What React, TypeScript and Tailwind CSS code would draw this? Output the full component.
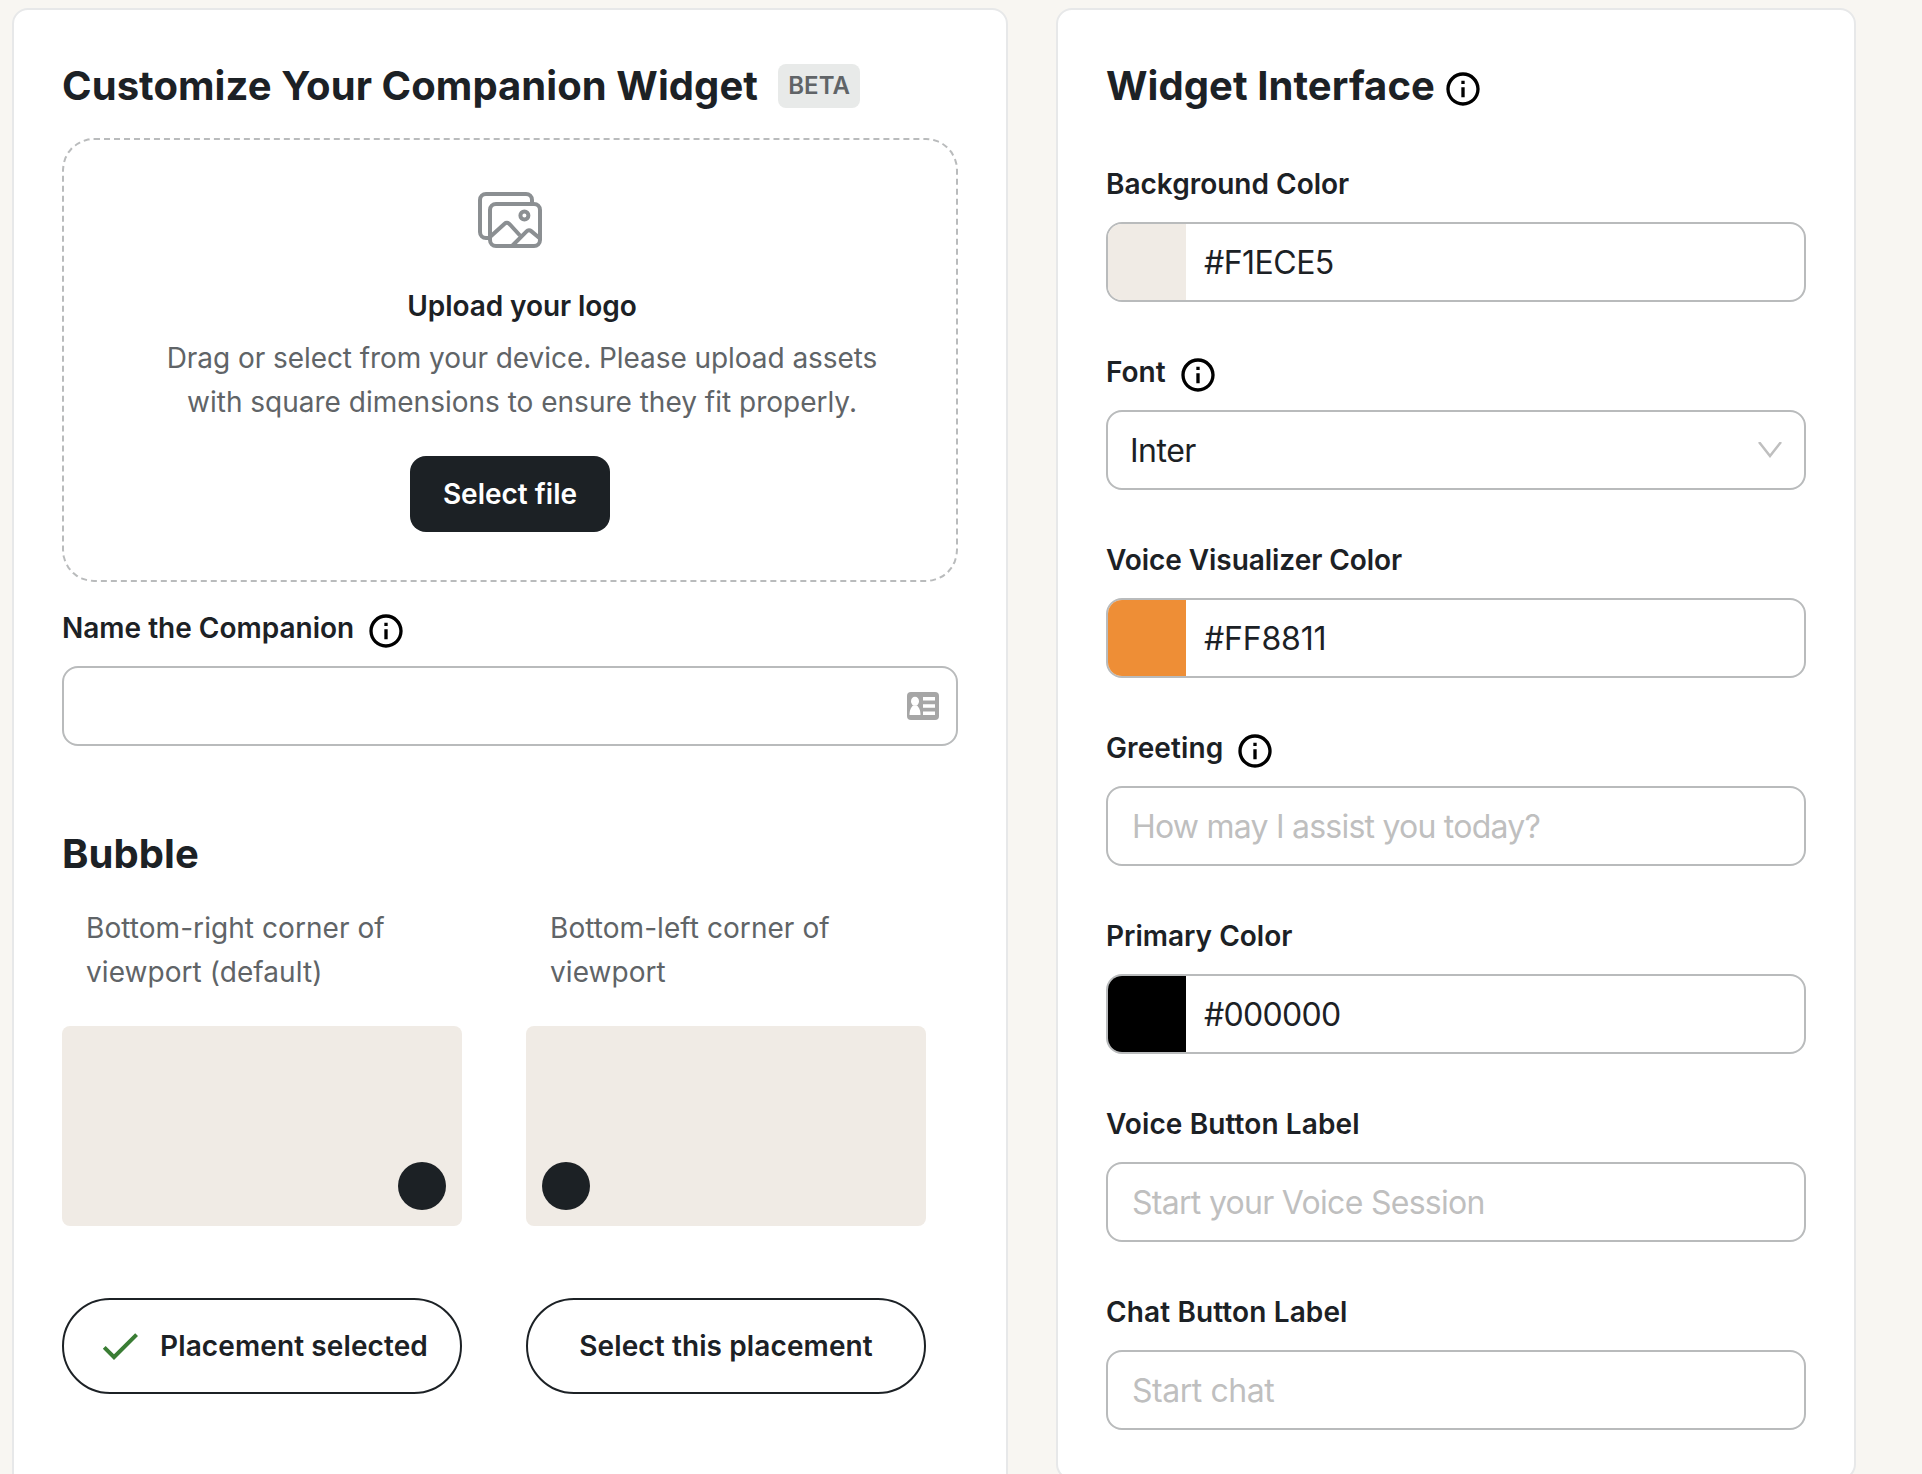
import React from "react";

function InfoIcon({ className = "" }: { className?: string }) {
  return (
    <svg viewBox="0 0 24 24" className={`h-10 w-10 shrink-0 fill-black ${className}`}>
      <path d="M11 7h2v2h-2zm0 4h2v6h-2zm1-9C6.48 2 2 6.48 2 12s4.48 10 10 10 10-4.48 10-10S17.52 2 12 2zm0 18c-4.41 0-8-3.59-8-8s3.59-8 8-8 8 3.59 8 8-3.59 8-8 8z" />
    </svg>
  );
}

function GalleryIcon() {
  return (
    <svg viewBox="0 0 64 56" className="h-14 w-16" fill="none" stroke="#8b8f92" strokeWidth="4" strokeLinejoin="round">
      <path d="M11 46H8a6 6 0 0 1-6-6V8a6 6 0 0 1 6-6h40a6 6 0 0 1 6 6v4" />
      <rect x="12" y="12" width="50" height="42" rx="6" />
      <circle cx="46.4" cy="23.4" r="4" />
      <path d="M12 45L26.6 31.700a3.400 3.400 0 0 1 4.700 0.100L42 43.500" />
      <path d="M34 54L48.600 39.300a3.400 3.400 0 0 1 4.600 -0.200L62 46.500" />
    </svg>
  );
}

function ContactCardIcon() {
  return (
    <svg viewBox="0 0 32 28" className="h-7 w-8">
      <rect width="32" height="28" rx="4" fill="#a6a6a6" />
      <ellipse cx="8" cy="9.3" rx="4" ry="4.500" fill="#fff" />
      <path d="M2.500 23c0-5 1.500-7.500 3.500-9.500h4c2 2 3.500 4.500 3.500 9.500z" fill="#fff" />
      <path d="M16 5h12v3.500H16zM16 12.300h12v3.500H16zM16 19.500h12V23H16z" fill="#fff" />
    </svg>
  );
}

function Label({ text, info, className = "" }: { text: string; info?: boolean; className?: string }) {
  return (
    <div className={`flex h-11 items-center text-[28px] font-semibold leading-[44px] ${className}`}>
      <span>{text}</span>
      {info && <InfoIcon className="ml-3 mt-1.5" />}
    </div>
  );
}

function Field({
  label,
  info,
  labelClass,
  children,
}: {
  label: string;
  info?: boolean;
  labelClass?: string;
  children: React.ReactNode;
}) {
  return (
    <div className="flex flex-col gap-4">
      <Label text={label} info={info} className={labelClass} />
      <div className="flex h-20 items-center overflow-hidden rounded-2xl border-2 border-[#b9bbbc] text-[32px] leading-[48px]">
        {children}
      </div>
    </div>
  );
}

function ColorValue({ swatch, value, className }: { swatch: string; value: string; className: string }) {
  return (
    <>
      <div className={`h-full w-[78px] shrink-0 ${swatch}`} />
      <span className={`ml-[18px] mt-0.5 ${className}`}>{value}</span>
    </>
  );
}

function Placeholder({ children, className }: { children: string; className: string }) {
  return <span className={`ml-6 mt-0.5 text-[#bfbfbf] ${className}`}>{children}</span>;
}

function Placement({ text, side, selected }: { text: React.ReactNode; side: "left" | "right"; selected?: boolean }) {
  return (
    <div className="flex w-[400px] flex-col">
      <p className="h-[88px] pl-6 text-[28px] leading-[44px] tracking-[0.06px] text-[#606467]">{text}</p>
      <div className={`mt-8 flex h-[200px] items-end rounded-lg bg-[#f0ebe5] p-4 ${side === "right" ? "justify-end" : "justify-start"}`}>
        <div className="h-12 w-12 rounded-full bg-[#1c2125]" />
      </div>
      <button className="mt-[72px] flex h-24 items-center justify-center rounded-full border-2 border-[#1c2125] text-[28px] font-semibold tracking-[0.11px]">
        {selected && (
          <svg viewBox="0 0 24 24" className="mr-4 h-12 w-12 fill-[#3a7d34]">
            <path d="M9 16.170 4.830 12l-1.420 1.410L9 19 21 7l-1.410-1.410z" />
          </svg>
        )}
        {selected ? "Placement selected" : "Select this placement"}
      </button>
    </div>
  );
}

export default function App() {
  return (
    <main className="flex h-[1474px] w-[1922px] items-start gap-12 overflow-hidden bg-[#f8f6f2] pl-3 pt-2 font-['Inter',sans-serif] text-[#1c2125]">
      <section className="h-[1500px] w-[996px] shrink-0 rounded-2xl border-2 border-[#e7e8e9] bg-white px-12 pt-12">
        <div className="flex h-14 items-center">
          <h1 className="text-[40px] font-bold leading-[56px] tracking-[0.07px]">Customize Your Companion Widget</h1>
          <span className="ml-5 flex h-11 w-[82px] items-center justify-center rounded-lg bg-[#e8eae9] text-2xl font-semibold text-[#606467]">
            BETA
          </span>
        </div>
        <div className="mt-6 flex h-[444px] flex-col items-center rounded-[32px] border-2 border-dashed border-[#b9bbbc] pt-[52px]">
          <GalleryIcon />
          <h2 className="mt-9 pl-6 text-[28px] font-semibold leading-[44px] tracking-[-0.06px]">Upload your logo</h2>
          <p className="mt-2 pl-6 text-center text-[28px] leading-[44px] text-[#606467]">
            <span className="tracking-[-0.06px]">Drag or select from your device. Please upload assets</span>
            <br />
            with square dimensions to ensure they fit properly.
          </p>
          <button className="mt-8 h-[76px] w-[200px] rounded-2xl bg-[#1c2125] text-[28px] font-semibold text-white">
            Select file
          </button>
        </div>
        <Label text="Name the Companion" info className="mt-6" />
        <div className="mt-4 flex h-20 items-center justify-end rounded-2xl border-2 border-[#b9bbbc] pr-[17px]">
          <ContactCardIcon />
        </div>
        <h1 className="mt-20 text-[40px] font-bold leading-[56px] tracking-[0.07px]">Bubble</h1>
        <div className="mt-6 flex gap-16">
          <Placement
            side="right"
            selected
            text={
              <>
                Bottom-right corner of
                <br />
                viewport (default)
              </>
            }
          />
          <Placement
            side="left"
            text={
              <>
                Bottom-left corner of
                <br />
                viewport
              </>
            }
          />
        </div>
      </section>

      <section className="flex h-[1472px] w-[800px] shrink-0 flex-col rounded-2xl border-2 border-[#e7e8e9] bg-white px-12 pt-12">
        <div className="flex h-14 items-center">
          <h1 className="text-[40px] font-bold leading-[56px] tracking-[0.07px]">Widget Interface</h1>
          <InfoIcon className="ml-2 mt-1.5" />
        </div>
        <div className="mt-12 flex flex-col gap-12">
          <Field label="Background Color">
            <ColorValue swatch="bg-[#f0ebe5]" value="#F1ECE5" className="tracking-[-0.53px]" />
          </Field>
          <Field label="Font" info>
            <span className="ml-[22px] mt-0.5 grow tracking-[-0.5px]">Inter</span>
            <svg viewBox="0 0 24 16" className="mr-[22px] h-4 w-6" fill="none" stroke="#bfbfbf" strokeWidth="2.500">
              <path d="M1 0l11 14L23 0" />
            </svg>
          </Field>
          <Field label="Voice Visualizer Color" labelClass="tracking-[-0.05px]">
            <ColorValue swatch="bg-[#ee8e36]" value="#FF8811" className="tracking-[-0.2px]" />
          </Field>
          <Field label="Greeting" info labelClass="tracking-[0.1px]">
            <Placeholder className="tracking-[-0.77px]">How may I assist you today?</Placeholder>
          </Field>
          <Field label="Primary Color">
            <ColorValue swatch="bg-black" value="#000000" className="tracking-[-0.7px]" />
          </Field>
          <Field label="Voice Button Label" labelClass="tracking-[0.1px]">
            <Placeholder className="tracking-[-0.71px]">Start your Voice Session</Placeholder>
          </Field>
          <Field label="Chat Button Label" labelClass="tracking-[0.12px]">
            <Placeholder className="tracking-[-0.45px]">Start chat</Placeholder>
          </Field>
        </div>
      </section>
    </main>
  );
}
